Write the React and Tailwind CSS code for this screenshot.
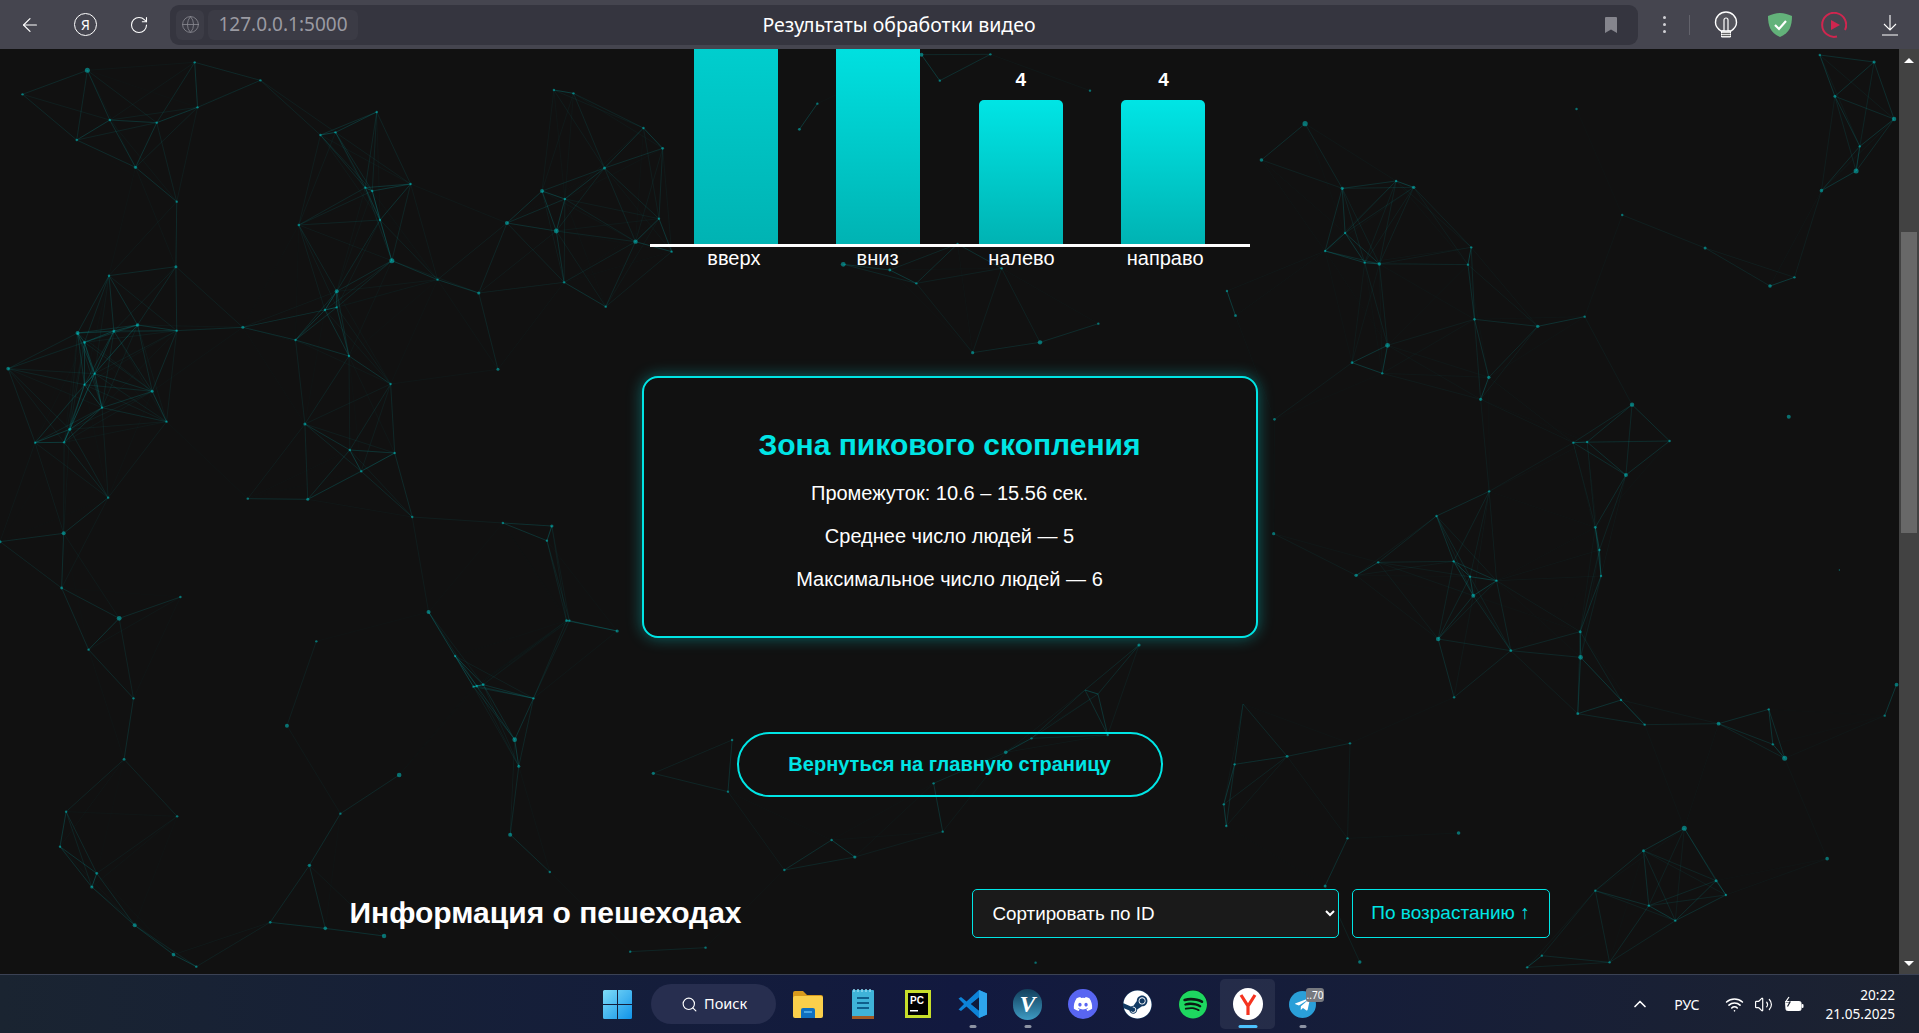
import React from 'react';
import { ArrowLeft, RotateCw, Globe, Search, ChevronUp, Wifi, Volume2 } from 'lucide-react';
import { FaDiscord, FaSteam, FaSpotify, FaTelegramPlane } from 'react-icons/fa';

// particle positions read off the reference, grouped by the crop they came from
const fromCrop = (x0, y0, sx, list) => list.map(([x, y, r]) => [x0 + x / sx, y0 + y / 3, r || 1.2]);

const nodes = [
  ...fromCrop(0, 40, 2.45, [[214,91,2.5],[55,163],[477,67],[638,121],[484,202],[384,248],[269,240],[188,300],[332,382,1.6],[433,485],[785,285],[822,277],[923,216],[1006,432],[895,443],[912,453],[931,540],[732,555],[960,662,2.5],[1072,719],[1173,759,1.6],[825,754,2],[825,802],[796,810],[724,900],[855,948],[957,1032],[1220,988,1.5],[595,862,1.5],[433,872],[431,680,1.5],[267,707],[337,855,1.8],[279,873,1.5],[190,879,2],[207,907,1.5],[232,1001],[207,1034],[373,1054,1.5],[250,1103],[408,1145],[20,986,1.8],[171,1168,1.5],[157,1207],[86,1208],[265,1373],[747,1152,1.5],[857,1230],[967,1239],[885,1294],[754,1378,1.5],[607,1376],[1010,1431],[1242,549,2],[1328,453,2],[1384,477],[1363,573,2.4],[1382,727],[1484,800],[1557,605,2.2],[1481,384,1.5],[1357,150],[1405,160]]),
  ...fromCrop(0, 520, 2.45, [[156,40,2],[0,65,1.5],[151,204,1.4],[292,295,2.4],[442,231],[217,389],[327,535],[304,718,1.4],[162,875],[434,889],[147,980],[237,1060,1.4],[225,1101,1.6],[330,1216,2],[425,1304,1.8],[481,1340],[662,1207,1.3],[797,1225,1.8],[941,1248,2.2],[758,1036,1.7],[834,881],[978,765,2.3],[703,617,2],[775,364],[1050,276,2],[1115,408],[1160,500],[1168,498],[1184,494,1.4],[1307,535],[1388,302,1.4],[1395,302],[1512,333,1.6],[1261,659,2.3],[1271,739,1.5],[1250,944,2],[1347,1056],[1232,9],[1352,18,1.6],[1340,62],[1544,1295]]),
  ...fromCrop(1270, 49, 2.45, [[86,224,2.6],[177,418,1.6],[309,396],[352,415,1.7],[184,552],[135,606],[232,641],[268,645,1.8],[493,595],[485,647],[501,811,1.3],[656,832,1.7],[771,803],[288,889,2.4],[201,941,1.4],[275,973],[536,985,1.7],[516,1051,1.6],[11,1111,1.3],[887,1067,2.2],[743,1181],[777,1179],[979,1176],[872,1278,2],[537,1327],[408,1401],[797,1435,1.4],[1271,1103,2],[751,180],[863,498],[1066,597,1.5],[1225,711,1.8],[1285,685],[1351,425,1.8],[1436,366,2.5],[1445,292],[1529,210,2.2],[1384,142,1.5],[1480,39,1.6],[1347,18]]),
  ...fromCrop(1270, 520, 2.45, [[9,41,1.6],[265,127],[211,166,1.7],[450,124],[490,170],[555,182,1.2],[498,227,2],[412,357,2.2],[590,392,1.4],[760,335,1.5],[761,412,2.3],[807,90],[811,168],[860,540],[754,581,1.4],[918,614],[1099,611,1.9],[1222,568],[1232,673],[1261,715,2.5],[1506,587],[1535,494,1.9],[1395,150,0.7],[42,709,1.4],[196,670],[451,532],[190,955],[462,939,1.8],[135,1098,1.5],[220,1326,1.7],[1015,925,2.5],[915,992,1.5],[1093,1082,1.5],[1117,1125],[928,1157],[993,1202],[797,1112],[666,1307],[832,1327],[630,1342],[1365,1016,1.8]]),
  ...fromCrop(640, 240, 2.45, [[498,73,2.4],[612,90,1.4],[677,130],[886,85],[778,12],[815,338,1.6],[980,307,2.2],[1123,251],[1438,153],[1459,227,1.4]]),
  ...fromCrop(630, 40, 2.45, [[714,44,2],[759,122],[883,43],[1127,152],[1547,360,1.8],[459,191],[415,268,1.4],[33,264],[80,325,1.4],[71,536],[102,635]]),
  ...fromCrop(320, 720, 1.206, [[402,160,1.6],[497,60],[492,215],[740,190],[827,97,1.8],[858,55],[950,45],[1103,133],[1090,253],[1093,318],[751,335],[617,360],[645,411,1.6],[560,450],[863,728],[465,683]]),
  [1139,645,1.6],[1098,694],[1243,704],[1085,690],
];

// same rule the page's canvas uses: link close particles, fade with distance
const MAX_DIST = 122;
const links = [];
nodes.forEach((a, i) => {
  for (let j = i + 1; j < nodes.length; j++) {
    const b = nodes[j];
    const d = Math.hypot(a[0] - b[0], a[1] - b[1]);
    if (d < MAX_DIST) links.push([a, b, 0.25 * (1 - d / MAX_DIST)]);
  }
});

const Network = () => (
  <svg className="absolute left-0 top-[-49px] w-[1899px] h-[1033px]" viewBox="0 0 1899 1033">
    {links.map(([a, b, o], i) => (
      <line key={i} x1={a[0]} y1={a[1]} x2={b[0]} y2={b[1]} stroke="#00e5e5" strokeOpacity={o} strokeWidth="1" />
    ))}
    {nodes.map((n, i) => (
      <circle key={i} cx={n[0]} cy={n[1]} r={n[2]} fill="#00e5e5" fillOpacity="0.45" />
    ))}
  </svg>
);

const BrowserBar = () => (
  <div className="h-[49px] shrink-0 bg-[#45454f] flex items-center relative font-['Noto_Sans',sans-serif]">
    <ArrowLeft size={22} strokeWidth={1.3} className="text-white ml-[19px]" />
    <div className="ml-[33px] w-[23px] h-[23px] rounded-full border border-white text-white text-[14px] flex items-center justify-center">Я</div>
    <RotateCw size={20} strokeWidth={1.3} className="text-white ml-[32px]" />
    <div className="ml-[21px] w-[1468px] h-[40px] bg-[#35353f] rounded-[9px] flex items-center pl-[6px] pr-[20px]">
      <div className="w-[28px] h-[30px] bg-[#3c3c46] rounded-[6px] flex items-center justify-center">
        <Globe size={19} strokeWidth={1} className="text-[#8b8b93]" />
      </div>
      <div className="ml-[4px] h-[30px] w-[150px] bg-[#3b3b45] rounded-[6px] flex items-center justify-center text-[19px] text-[#9a9aa2]">127.0.0.1:5000</div>
      <div className="flex-1 text-center text-white text-[19.500px] pr-[164px]">Результаты обработки видео</div>
      <svg width="14" height="18" viewBox="0 0 14 18"><path d="M1 2a1 1 0 0 1 1-1h10a1 1 0 0 1 1 1v15l-6-3.500L1 17z" fill="#85858d" /></svg>
    </div>
    <div className="ml-[25px] flex flex-col gap-[4px]">
      <span className="w-[3px] h-[3px] bg-[#d0d0d5] rounded-full" />
      <span className="w-[3px] h-[3px] bg-[#d0d0d5] rounded-full" />
      <span className="w-[3px] h-[3px] bg-[#d0d0d5] rounded-full" />
    </div>
    <div className="ml-[23px] w-px h-[20px] bg-[#62626b]" />
    <svg className="ml-[24px]" width="24" height="28" viewBox="0 0 24 28" fill="none">
      <path d="M7 20c-3-2-5.500-4.500-5.500-8.500a10.500 10.500 0 0 1 21 0c0 4-2.500 6.500-5.500 8.500z" fill="#55555d" stroke="#fff" strokeWidth="1.400" />
      <path d="M10 20v-11a2 2 0 0 1 4 0v11z" fill="#55555d" stroke="#fff" strokeWidth="1.200" />
      <path d="M7.500 20h9v6h-9z" fill="#dcdcdc" stroke="#fff" />
      <path d="M7.500 22.500h9M7.500 24.500h9" stroke="#666" />
    </svg>
    <svg className="ml-[29px]" width="26" height="26" viewBox="0 0 26 26">
      <path d="M13 1c4 0 9 1.500 12 3 0 9-2 17-12 21C3 21 1 13 1 4c3-1.500 8-3 12-3z" fill="#63b27a" />
      <path d="M8 13l4 4 7-8" fill="none" stroke="#fff" strokeWidth="2.200" />
    </svg>
    <svg className="ml-[28px]" width="26" height="26" viewBox="0 0 26 26" fill="none">
      <path d="M16 24.500A12 12 0 1 1 24 18" stroke="#d0264f" strokeWidth="2" />
      <path d="M10 8l9 5-9 5z" fill="#d0264f" />
    </svg>
    <svg className="ml-[33px]" width="20" height="22" viewBox="0 0 20 22" fill="none" stroke="#fff" strokeWidth="1.100">
      <path d="M10 1v15M4 10l6 6 6-6M2 21h16" />
    </svg>
  </div>
);

const WinLogo = () => (
  <svg width="29" height="29" viewBox="0 0 29 29">
    <defs>
      <linearGradient id="win" x1="0" y1="0" x2="1" y2="1">
        <stop offset="0" stopColor="#7fdcf7" />
        <stop offset="1" stopColor="#1093ea" />
      </linearGradient>
    </defs>
    <path d="M0 1.500a1.500 1.500 0 0 1 1.500-1.500H14v14H0zM15 0h12.500A1.500 1.500 0 0 1 29 1.500V14H15zM0 15h14v14H1.500A1.500 1.500 0 0 1 0 27.500zM15 15h14v12.500a1.500 1.500 0 0 1-1.500 1.500H15z" fill="url(#win)" />
  </svg>
);

const FolderIcon = () => (
  <svg width="30" height="28" viewBox="0 0 30 28">
    <path d="M0 3a2 2 0 0 1 2-2h8l4 4h14a2 2 0 0 1 2 2v4H0z" fill="#d99a1c" />
    <rect x="0" y="6" width="30" height="22" rx="2" fill="#fbcf4b" />
    <path d="M8 20a2 2 0 0 1 2-2h10a2 2 0 0 1 2 2v8H8z" fill="#0f6fc0" />
    <rect x="11" y="21" width="8" height="2" fill="#48a6e6" />
  </svg>
);

const NotepadIcon = () => (
  <svg width="22" height="30" viewBox="0 0 22 30">
    <rect x="0" y="1" width="22" height="27" rx="1" fill="#3fb3d8" />
    <rect x="0" y="27" width="22" height="3" fill="#a15a24" />
    <path d="M2 0v3M6 0v3M10 0v3M14 0v3M18 0v3" stroke="#8edcf2" strokeWidth="1.500" />
    <path d="M5 9h12M5 14h12M5 19h12" stroke="#0f5f8c" strokeWidth="2" />
  </svg>
);

const PyCharmIcon = () => (
  <svg width="26" height="28" viewBox="0 0 26 28">
    <rect x="0" y="0" width="26" height="28" fill="#c7de2a" />
    <rect x="3" y="3" width="20" height="22" fill="#000" />
    <text x="5" y="14" fontSize="10" fontWeight="700" fill="#fff" fontFamily="Liberation Sans, sans-serif">PC</text>
    <rect x="5" y="20" width="8" height="1.500" fill="#fff" />
  </svg>
);

const VsCodeIcon = () => (
  <svg width="30" height="30" viewBox="0 0 30 30">
    <path d="M21 1l8 3.500v21L21 29 8.500 17.500 3 22 0.500 20.500 6 15 0.500 9.500 3 8l5.500 4.500zM21 8.500L13 15l8 6.500z" fill="#0d83d8" />
    <path d="M21 1l8 3.500v21L21 29z" fill="#2ea4ec" />
    <path d="M21 8.500L13 15l8 6.500z" fill="#0f1c3d" />
  </svg>
);

const VIcon = () => (
  <div className="w-[29px] h-[31px] rounded-full bg-gradient-to-b from-[#123f5c] to-[#3f9cc4] flex items-center justify-center text-white text-[24px] font-bold italic font-['Liberation_Serif',serif] leading-none">V</div>
);

const YandexIcon = () => (
  <svg width="30" height="32" viewBox="0 0 30 32">
    <ellipse cx="15" cy="16" rx="15" ry="16" fill="#fff" />
    <path d="M8 7l7 11 7-11M15 17v10" fill="none" stroke="#f5331f" strokeWidth="3.200" />
  </svg>
);

const BatteryIcon = () => (
  <svg width="20" height="16" viewBox="0 0 20 16" fill="none">
    <path d="M1.500 5.500h14a1.500 1.500 0 0 1 1.500 1.500v6a1.500 1.500 0 0 1-1.500 1.500h-12a1.500 1.500 0 0 1-1.500-1.500z" fill="#fff" stroke="#fff" />
    <rect x="17.500" y="8" width="2" height="4" rx="1" fill="#fff" />
    <path d="M6 0.500L2.500 6h3.500L3.500 10.500" stroke="#1c2230" strokeWidth="1.200" />
    <path d="M5 1L2 5.500h3" stroke="#fff" strokeWidth="1.200" />
  </svg>
);

const TaskIcon = ({ children, mark, active }) => (
  <div className={`relative w-[55px] h-[50px] flex items-center justify-center rounded-[5px] ${active ? 'bg-white/[.07]' : ''}`}>
    {children}
    {mark && <span className={`absolute bottom-[1px] left-1/2 -translate-x-1/2 h-[3px] rounded-full ${active ? 'w-[19px] bg-[#4cc2ff]' : 'w-[7px] bg-[#8d93a3]'}`} />}
  </div>
);

const Taskbar = () => (
  <div className="h-[59px] shrink-0 border-t border-[#3b4254] bg-gradient-to-r from-[#1a2431] via-[#12193f] to-[#1c2230] flex items-center pl-[603px] pr-[24px] font-['Noto_Sans',sans-serif] text-white">
    <WinLogo />
    <div className="ml-[19px] w-[125px] h-[40px] rounded-full bg-[#272e4f] flex items-center pl-[30px] gap-[6px] text-[14.500px]">
      <Search size={17} strokeWidth={1.600} />
      Поиск
    </div>
    <div className="ml-[4px] flex items-center">
      <TaskIcon><FolderIcon /></TaskIcon>
      <TaskIcon><NotepadIcon /></TaskIcon>
      <TaskIcon><PyCharmIcon /></TaskIcon>
      <TaskIcon mark><VsCodeIcon /></TaskIcon>
      <TaskIcon mark><VIcon /></TaskIcon>
      <TaskIcon>
        <div className="w-[30px] h-[30px] rounded-full bg-[#5865f2] flex items-center justify-center"><FaDiscord size={20} /></div>
      </TaskIcon>
      <TaskIcon>
        <div className="w-[29px] h-[29px] rounded-full bg-[#123a63] flex items-center justify-center"><FaSteam size={29} /></div>
      </TaskIcon>
      <TaskIcon>
        <div className="w-[28px] h-[28px] rounded-full bg-[#0b1a12] flex items-center justify-center"><FaSpotify size={29} className="text-[#1ed760]" /></div>
      </TaskIcon>
      <TaskIcon mark active><YandexIcon /></TaskIcon>
      <TaskIcon mark>
        <div className="w-[27px] h-[27px] rounded-full bg-[#2a9fd8] flex items-center justify-center"><FaTelegramPlane size={17} /></div>
        <span className="absolute top-[9px] right-[6px] w-[18px] h-[14px] rounded-[3px] bg-[#77797f] text-[10px] leading-[14px] text-center">..70</span>
      </TaskIcon>
    </div>
    <ChevronUp size={20} strokeWidth={2} className="ml-auto" />
    <span className="ml-[24px] text-[14px]">РУС</span>
    <Wifi size={19} strokeWidth={2} className="ml-[25px]" />
    <Volume2 size={19} strokeWidth={1.500} className="ml-[10px]" />
    <div className="ml-[11px]"><BatteryIcon /></div>
    <div className="ml-[22px] text-right text-[13.600px] leading-[19px]">
      <div>20:22</div>
      <div>21.05.2025</div>
    </div>
  </div>
);

const Scrollbar = () => (
  <div className="w-[20px] shrink-0 bg-[#424242] flex flex-col items-center">
    <div className="h-[22px] flex items-center justify-center">
      <div className="w-0 h-0 border-x-[5px] border-x-transparent border-b-[5px] border-b-white" />
    </div>
    <div className="mt-[161px] w-[16px] h-[301px] bg-[#686868]" />
    <div className="mt-auto h-[22px] flex items-center justify-center">
      <div className="w-0 h-0 border-x-[5px] border-x-transparent border-t-[5px] border-t-white" />
    </div>
  </div>
);

const bars = [
  { label: 'вверх', height: 'h-[360px]' },
  { label: 'вниз', height: 'h-[216px]' },
  { label: 'налево', height: 'h-[144px]', value: 4 },
  { label: 'направо', height: 'h-[144px]', value: 4 },
];

const Chart = () => (
  <div className="w-[600px] flex flex-col items-center">
    <div className="w-full h-[195px] overflow-hidden flex justify-between items-end px-11">
      {bars.map((b) => (
        <div key={b.label} className="w-[84px] flex flex-col items-center shrink-0">
          {b.value && <span className="text-white text-[19px] font-bold mb-[9px] leading-[22px]">{b.value}</span>}
          <div className={`w-full ${b.height} shrink-0 rounded-t-[5px] bg-gradient-to-b from-[#00e5e5] to-[#00b3b3]`} />
        </div>
      ))}
    </div>
    <div className="w-full h-[3px] bg-white" />
    <div className="w-[575px] grid grid-cols-4">
      {bars.map((b) => (
        <span key={b.label} className="text-center text-white text-[20px] leading-[22px]">{b.label}</span>
      ))}
    </div>
  </div>
);

const PeakCard = () => (
  <div className="mt-[107px] w-[616px] h-[262px] border-2 border-[#00e5e5] rounded-[16px] bg-[#111111] shadow-[0_0_15px_rgba(0,229,229,0.4)] flex flex-col items-center pt-[50px]">
    <h2 className="text-[#00e5e5] text-[30px] font-bold leading-[34px]">Зона пикового скопления</h2>
    <p className="mt-[20px] text-white text-[20px] leading-[23px]">Промежуток: 10.6 – 15.56 сек.</p>
    <p className="mt-[20px] text-white text-[20px] leading-[23px]">Среднее число людей — 5</p>
    <p className="mt-[20px] text-white text-[20px] leading-[23px]">Максимальное число людей — 6</p>
  </div>
);

export default function App() {
  return (
    <div className="w-full h-[1033px] flex flex-col overflow-hidden bg-[#111111] font-['Liberation_Sans',Arial,sans-serif]">
      <BrowserBar />
      <div className="flex-1 flex min-h-0">
        <main className="relative flex-1 overflow-hidden">
          <Network />
          <div className="relative flex flex-col items-center">
            <Chart />
            <PeakCard />
            <button className="mt-[94px] w-[426px] h-[65px] pb-[2px] rounded-full border-2 border-[#00e5e5] text-[#00e5e5] text-[20px] font-bold">
              Вернуться на главную страницу
            </button>
            <div className="mt-[92px] w-[1200px] flex items-center justify-between">
              <h2 className="text-white text-[30px] font-bold leading-[38px] pb-[2px]">Информация о пешеходах</h2>
              <div className="flex items-center gap-[13px]">
                <select className="w-[367px] h-[49px] pl-4 pr-[2px] bg-[#1a1a1a] border border-[#00e5e5] rounded-[5px] text-white text-[18.800px]">
                  <option>Сортировать по ID</option>
                </select>
                <button className="w-[198px] h-[49px] border border-[#00e5e5] rounded-[5px] text-[#00e5e5] text-[19px]">По возрастанию ↑</button>
              </div>
            </div>
          </div>
        </main>
        <Scrollbar />
      </div>
      <Taskbar />
    </div>
  );
}
